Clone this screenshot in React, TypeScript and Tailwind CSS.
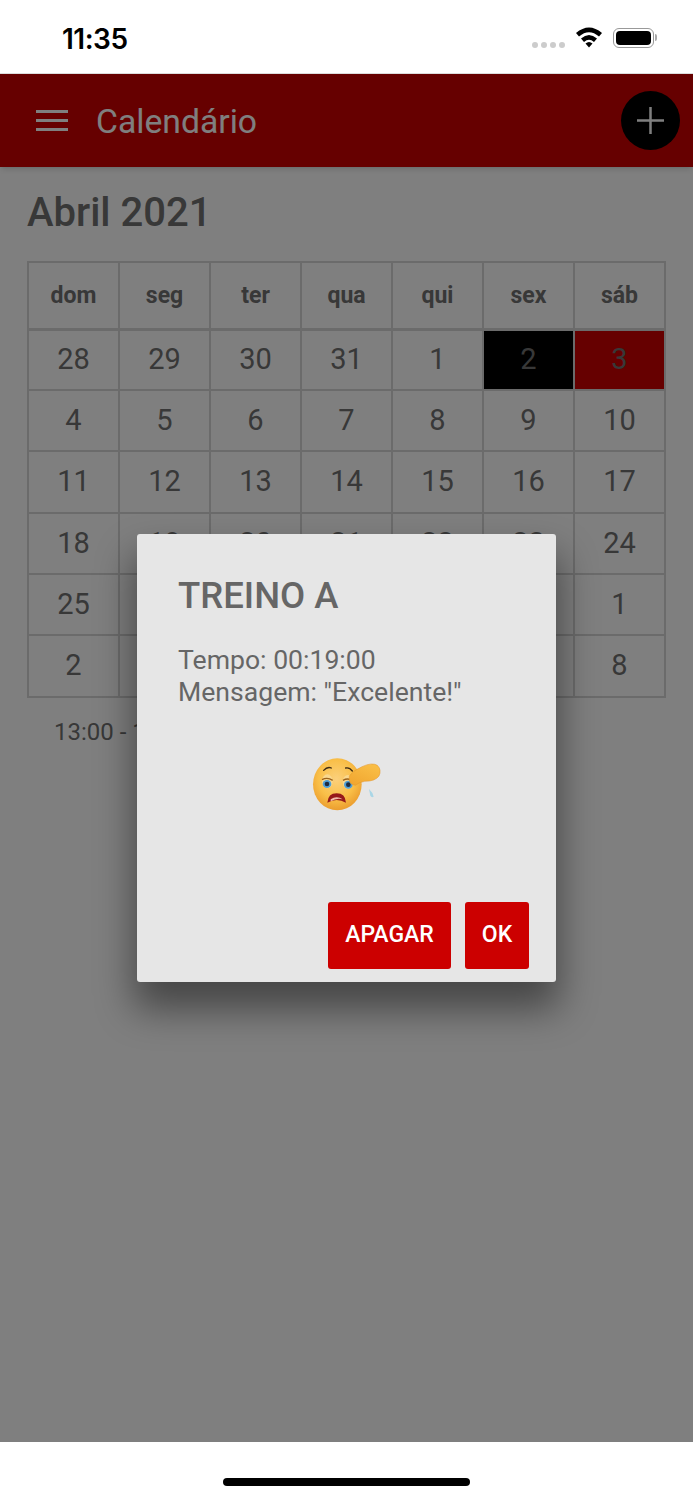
const weeks = [
  [28, 29, 30, 31, 1, 2, 3],
  [4, 5, 6, 7, 8, 9, 10],
  [11, 12, 13, 14, 15, 16, 17],
  [18, 19, 20, 21, 22, 23, 24],
  [25, 26, 27, 28, 29, 30, 1],
  [2, 3, 4, 5, 6, 7, 8],
];
const days = ['dom', 'seg', 'ter', 'qua', 'qui', 'sex', 'sáb'];

function FaceEmoji() {
  return (
    <svg width="70" height="58" viewBox="96 48 210 174">
      <defs>
        <radialGradient id="face" cx="0.48" cy="0.4" r="0.62">
          <stop offset="0" stopColor="#fbd07c" />
          <stop offset="0.6" stopColor="#f9bf48" />
          <stop offset="1" stopColor="#ea9a2c" />
        </radialGradient>
        <linearGradient id="hand" x1="0" y1="1" x2="0.6" y2="0">
          <stop offset="0" stopColor="#f0a42e" />
          <stop offset="1" stopColor="#f9bd45" />
        </linearGradient>
      </defs>
      <ellipse cx="172" cy="133" rx="73" ry="78" fill="url(#face)" />
      {/* eyebrows */}
      <path d="M131 91 Q142 79 154 84" fill="none" stroke="#3d2a12" strokeWidth="4" strokeLinecap="round" />
      <path d="M197 84 Q208 81 217 93" fill="none" stroke="#3d2a12" strokeWidth="4" strokeLinecap="round" />
      {/* eyes */}
      <ellipse cx="142" cy="124" rx="16" ry="21" fill="#f9d88f" />
      <ellipse cx="141" cy="132" rx="13" ry="12" fill="#4f9fd6" />
      <circle cx="141" cy="132" r="7" fill="#1f2c40" />
      <path d="M126 119 Q142 110 158 121" fill="none" stroke="#9c621a" strokeWidth="4" />
      <ellipse cx="204" cy="126" rx="16" ry="21" fill="#f9d88f" />
      <ellipse cx="205" cy="134" rx="13" ry="12" fill="#4f9fd6" />
      <circle cx="205" cy="134" r="7" fill="#1f2c40" />
      <path d="M189 121 Q204 112 220 123" fill="none" stroke="#9c621a" strokeWidth="4" />
      {/* mouth */}
      <path d="M142 188 Q144 160 170 160 Q196 160 198 188 Q170 172 142 188 Z" fill="#96191a" />
      <path d="M152 178 Q170 166 188 178 Q170 173 152 184 Z" fill="#f2bcab" />
      {/* hand */}
      <path d="M208 108 Q218 92 246 80 Q276 66 292 76 Q306 90 297 108 Q286 124 254 124 Q236 127 226 136 Q204 134 208 108 Z" fill="url(#hand)" stroke="#e3952a" strokeWidth="1.5" />
      {/* sweat drop */}
      <path d="M267 147 Q279 158 281 170 Q275 174 271 167 Z" fill="#a9d6e6" />
    </svg>
  );
}

export default function App() {
  return (
    <div className="flex h-[1500px] w-[693px] flex-col overflow-hidden bg-white font-['Roboto',sans-serif]">
      {/* Status bar */}
      <div className="flex h-[74px] shrink-0 items-center justify-between border-b border-[#dddddd] pr-[36px] pl-[62px]">
        <span className="mt-[4px] font-['Inter',sans-serif] text-[28px] font-semibold tracking-[-0.5px] text-black">11:35</span>
        <div className="mt-[3px] flex items-center">
          <div className="mt-[13px] mr-[10px] flex gap-[3px]">
            <span className="h-[6px] w-[6px] rounded-full bg-[#cccccc]" />
            <span className="h-[6px] w-[6px] rounded-full bg-[#cccccc]" />
            <span className="h-[6px] w-[6px] rounded-full bg-[#cccccc]" />
            <span className="h-[6px] w-[6px] rounded-full bg-[#cccccc]" />
          </div>
          <svg width="28" height="22" viewBox="0 0 28 22" className="mr-[10px] mb-[2px]">
            <path d="M1 7 Q14 -4 27 7 L24 10.5 Q14 2 4 10.5 Z" fill="black" />
            <path d="M6 12.5 Q14 5.5 22 12.5 L19 16 Q14 11.5 9 16 Z" fill="black" />
            <path d="M10.5 17.5 Q14 14.5 17.5 17.5 L14 21.5 Z" fill="black" />
          </svg>
          <div className="mb-[1px] flex items-center">
            <div className="h-[20px] w-[41px] rounded-[6px] border border-[#999999] p-[2px]">
              <div className="h-full w-full rounded-[4px] bg-black" />
            </div>
            <div className="ml-[1px] h-[7px] w-[2px] rounded-r-full bg-[#aaaaaa]" />
          </div>
        </div>
      </div>

      <div className="relative min-h-0 flex-1">
        {/* Toolbar */}
        <div className="flex h-[93px] items-center justify-between bg-[#cc0000] pr-[13px] pl-[36px] shadow-md">
          <div className="flex items-center">
            <div className="flex w-[32px] flex-col gap-[5.5px]">
              <span className="h-[3.5px] bg-white" />
              <span className="h-[3.5px] bg-white" />
              <span className="h-[3.5px] bg-white" />
            </div>
            <span className="mt-[3px] ml-[28px] text-[33.7px] text-white">Calendário</span>
          </div>
          <div className="flex h-[59px] w-[59px] items-center justify-center rounded-full bg-black">
            <svg width="27" height="27" viewBox="0 0 27 27">
              <path d="M13.5 0 V27 M0 13.5 H27" stroke="white" strokeWidth="2.5" />
            </svg>
          </div>
        </div>

        {/* Calendar */}
        <div className="px-[27px]">
          <h1 className="mt-[22px] h-[48px] text-[40px] leading-[48px] font-medium text-[#707070]">Abril 2021</h1>
          <table className="mt-[24px] w-full table-fixed border-collapse text-[#707070]">
            <thead>
              <tr className="h-[67px]">
                {days.map((d) => (
                  <th key={d} className="border-2 border-b-[3px] border-[#d6d6d6] pt-[2px] text-[23px] font-bold">
                    {d}
                  </th>
                ))}
              </tr>
            </thead>
            <tbody>
              {weeks.map((week, i) => (
                <tr key={i} className={i === 2 || i === 5 ? 'h-[62px]' : 'h-[61px]'}>
                  {week.map((n, j) => {
                    let bg = '';
                    if (i === 0 && j === 5) bg = 'bg-black';
                    if (i === 0 && j === 6) bg = 'bg-[#cc0000]';
                    return (
                      <td key={j} className={`border-2 border-[#d6d6d6] text-center text-[29px] ${bg}`}>
                        {n}
                      </td>
                    );
                  })}
                </tr>
              ))}
            </tbody>
          </table>
          <p className="mt-[20px] pl-[27px] text-[24px] leading-[28px] text-[#707070]">13:00 - 14:00 TREINO A</p>
        </div>

        {/* Dialog */}
        <div className="absolute inset-0 flex items-center justify-center bg-black/50">
          <div className="flex h-[448px] w-[419px] flex-col rounded-[3px] bg-[#e6e6e6] shadow-[0_24px_38px_3px_rgba(0,0,0,0.45)]">
            <div className="px-[41px] pt-[40px]">
              <h2 className="text-[36.5px] leading-[44px] font-medium text-[#666666]">TREINO A</h2>
              <p className="mt-[26px] text-[26.6px] leading-[32px] text-[#666666]">
                Tempo: 00:19:00
                <br />
                Mensagem: "Excelente!"
              </p>
            </div>
            <div className="mt-[48px] flex justify-center">
              <FaceEmoji />
            </div>
            <div className="mt-auto flex justify-end gap-[14px] pr-[27px] pb-[13px]">
              <button className="h-[67px] w-[123px] rounded-[3px] bg-[#cc0000] text-[23px] font-medium text-white">APAGAR</button>
              <button className="h-[67px] w-[64px] rounded-[3px] bg-[#cc0000] text-[23px] font-medium text-white">OK</button>
            </div>
          </div>
        </div>
      </div>

      {/* Home indicator */}
      <div className="flex h-[58px] shrink-0 justify-center bg-white pt-[36px]">
        <div className="h-[8px] w-[247px] rounded-full bg-black" />
      </div>
    </div>
  );
}
